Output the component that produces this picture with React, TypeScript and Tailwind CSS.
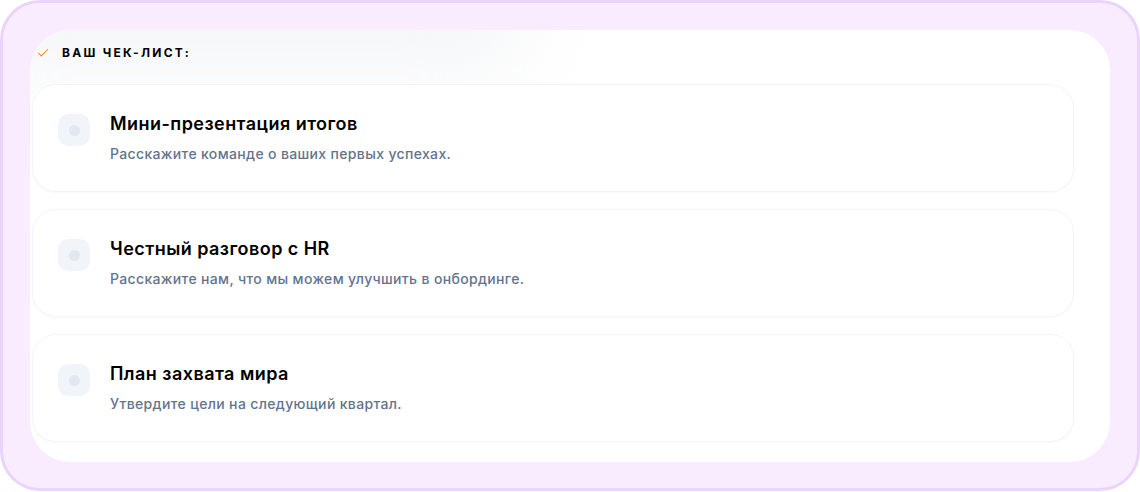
import React from 'react';
import { Check } from 'lucide-react';

interface ChecklistItem {
  title: string;
  description: string;
}

const items: ChecklistItem[] = [
  { title: 'Мини-презентация итогов', description: 'Расскажите команде о ваших первых успехах.' },
  { title: 'Честный разговор с HR', description: 'Расскажите нам, что мы можем улучшить в онбординге.' },
  { title: 'План захвата мира', description: 'Утвердите цели на следующий квартал.' },
];

const ChecklistCard: React.FC<{ item: ChecklistItem }> = ({ item }) => (
  <div className="flex items-start gap-5 rounded-3xl border border-slate-100 bg-white pl-[25px] pr-6 pt-[25px] pb-[27px] shadow-[0_1px_2px_rgba(15,23,42,0.03)]">
    {/* unchecked box */}
    <div className="mt-[4px] flex h-8 w-8 shrink-0 items-center justify-center rounded-[10px] bg-slate-100">
      <div className="h-[11px] w-[11px] rounded-full bg-slate-200" />
    </div>
    <div className="flex flex-col">
      <h4 className="text-lg leading-7 font-semibold tracking-[0.025em] text-black">{item.title}</h4>
      <p className="mt-1.5 text-sm leading-5 font-medium tracking-[0.025em] text-slate-500">{item.description}</p>
    </div>
  </div>
);

export default function App() {
  return (
    <div className="h-[492px] w-[1140px] bg-white font-['Inter',sans-serif]">
      <div className="h-[491px] rounded-[40px] border-[3px] border-[#ead4fc] bg-[#f8ecfe] p-[27px]">
        <div className="relative h-[432px] w-[1080px] overflow-hidden rounded-[40px] bg-white pl-[2px] pr-[36px]">
          {/* soft haze behind the heading */}
          <div className="pointer-events-none absolute -left-20 -top-16 h-[110px] w-[580px] rounded-full bg-gray-100/80 blur-2xl" />
          <div className="relative mb-[8px] flex h-[46px] items-center gap-[12px] pl-[4px]">
            <Check className="h-[14px] w-[14px] text-orange-400" strokeWidth={1.75} />
            <span className="text-xs font-bold uppercase tracking-[0.19em] text-black">Ваш чек-лист:</span>
          </div>
          <div className="relative flex flex-col gap-[17px]">
            {items.map((item) => (
              <ChecklistCard key={item.title} item={item} />
            ))}
          </div>
        </div>
      </div>
    </div>
  );
}
